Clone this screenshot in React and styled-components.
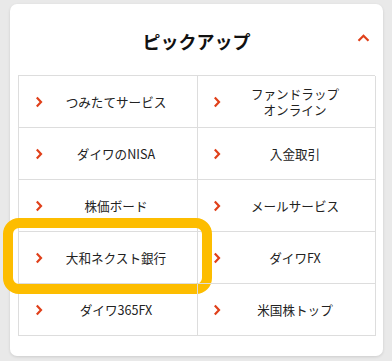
import styled, { createGlobalStyle } from "styled-components";

const GlobalStyle = createGlobalStyle`
  body {
    margin: 0;
    background: #e9e9e9;
    font-family: "Noto Sans CJK JP", "Noto Sans", sans-serif;
    color: #222;
  }
`;

const Page = styled.div`
  padding: 4px 9px 5px 10px;
`;

const Card = styled.section`
  width: 373px;
  height: 352px;
  box-sizing: border-box;
  background: #fff;
  border-radius: 7px;
  box-shadow: 0 1px 3px rgba(0, 0, 0, 0.12);
  padding: 0 8px;
`;

const Header = styled.div`
  position: relative;
  height: 71px;
  display: flex;
  align-items: center;
  justify-content: center;
`;

const Title = styled.h2`
  margin: 0;
  font-size: 18px;
  font-weight: 700;
  color: #111;
  padding-top: 2px;
`;

const Toggle = styled.button`
  position: absolute;
  right: 5px;
  top: 30px;
  border: none;
  background: none;
  padding: 0;
  display: flex;
  cursor: pointer;
`;

const Grid = styled.div`
  display: grid;
  grid-template-columns: 179px 178px;
  border-top: 1px solid #ddd;
  border-left: 1px solid #ddd;
`;

const Cell = styled.a`
  position: relative;
  height: 52px;
  box-sizing: border-box;
  border-right: 1px solid #ddd;
  border-bottom: 1px solid #ddd;
  display: flex;
  align-items: center;
  padding: 0 ${(p) => (p.$right ? "14px" : "16px")} 0 ${(p) => (p.$right ? "15px" : "16px")};
  color: #222;
  text-decoration: none;
`;

const Arrow = styled.svg`
  flex: none;
`;

const Label = styled.span`
  flex: 1;
  display: flex;
  flex-direction: column;
  align-items: center;
  padding-left: 8px;
  font-size: 12.6px;
  line-height: 16px;
  text-align: center;
`;

const Highlight = styled.span`
  position: absolute;
  left: -16px;
  top: -14px;
  width: 209px;
  height: 76px;
  box-sizing: border-box;
  border: 10px solid #fdbd00;
  border-radius: 16px;
  pointer-events: none;
`;

const items = [
  ["つみたてサービス"],
  ["ファンドラップ", "オンライン"],
  ["ダイワのNISA"],
  ["入金取引"],
  ["株価ボード"],
  ["メールサービス"],
  ["大和ネクスト銀行"],
  ["ダイワFX"],
  ["ダイワ365FX"],
  ["米国株トップ"],
];

function Chevron() {
  return (
    <Arrow width="8" height="12" viewBox="0 0 8 12">
      <path d="M1.8 1.6 L6 6 L1.8 10.4" fill="none" stroke="#e0401a" strokeWidth="2.2" />
    </Arrow>
  );
}

export default function App() {
  return (
    <>
      <GlobalStyle />
      <Page>
        <Card>
          <Header>
            <Title>ピックアップ</Title>
            <Toggle aria-label="閉じる">
              <svg width="13" height="8" viewBox="0 0 13 8">
                <path d="M1.5 6.8 L6.5 1.8 L11.5 6.8" fill="none" stroke="#e0401a" strokeWidth="2.2" />
              </svg>
            </Toggle>
          </Header>
          <Grid>
            {items.map((lines, i) => {
              const right = i % 2 === 1;
              return (
                <Cell key={i} href="#" $right={right}>
                  <Chevron />
                  <Label>
                    {lines.map((l) => (
                      <span key={l}>{l}</span>
                    ))}
                  </Label>
                  {i === 6 && <Highlight />}
                </Cell>
              );
            })}
          </Grid>
        </Card>
      </Page>
    </>
  );
}
